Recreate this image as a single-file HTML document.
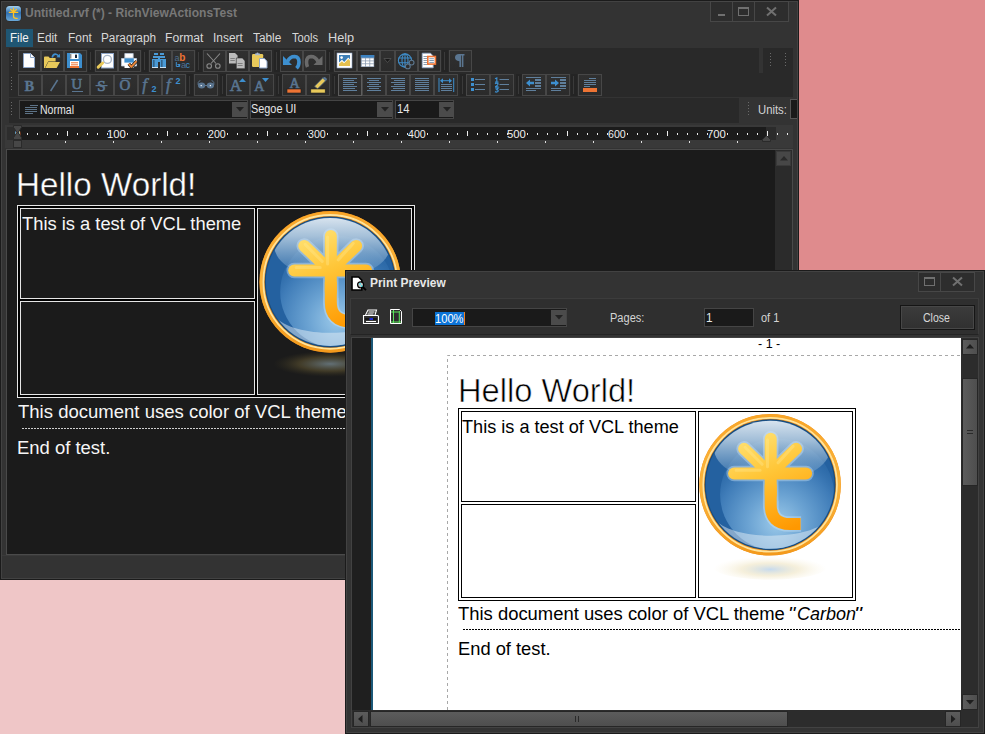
<!DOCTYPE html>
<html><head><meta charset="utf-8">
<style>
*{margin:0;padding:0;box-sizing:border-box}
html,body{width:985px;height:734px;overflow:hidden;background:#df8b8d;position:relative}
.a{position:absolute}
.t{position:absolute;white-space:pre;font-family:"Liberation Sans",sans-serif;transform-origin:0 0}
svg{position:absolute;overflow:visible}
</style></head><body>
<div class="a" style="left:0px;top:580px;width:345px;height:154px;background:#efc6c7;"></div>
<div class="a" style="left:0px;top:0px;width:799px;height:580px;background:#1b1b1b;"></div>
<div class="a" style="left:1px;top:1px;width:797px;height:578px;background:#424242;"></div>
<div class="a" style="left:2px;top:2px;width:795px;height:576px;background:#333333;"></div>
<div class="a" style="left:710px;top:1px;width:79px;height:21px;border:1px solid #474747;background:#2d2d2d;"></div>
<div class="a" style="left:732px;top:1px;width:1px;height:21px;background:#474747;"></div>
<div class="a" style="left:754px;top:1px;width:1px;height:21px;background:#474747;"></div>
<div class="a" style="left:718px;top:14px;width:7px;height:2px;background:#707070;"></div>
<div class="a" style="left:738px;top:7px;width:11px;height:9px;border:1px solid #707070;background:transparent;"></div>
<div class="a" style="left:738px;top:7px;width:11px;height:2px;background:#707070;"></div>
<svg style="left:766px;top:7px" width="11" height="9"><path d="M1 0.5L10 8.5M10 0.5L1 8.5" stroke="#707070" stroke-width="2"/></svg>
<div class="t" style="left:25.49px;top:7.20px;font-size:12px;line-height:12px;color:#787878;font-weight:700;font-style:normal;transform:scaleX(1.0052);">Untitled.rvf (*) - RichViewActionsTest</div>
<div class="a" style="left:6px;top:29px;width:27px;height:18px;background:#1f5673;"></div>
<div class="t" style="left:9.63px;top:32.40px;font-size:12px;line-height:12px;color:#f2f2f2;font-weight:400;font-style:normal;transform:scaleX(0.9667);">File</div>
<div class="t" style="left:37.41px;top:32.40px;font-size:12px;line-height:12px;color:#d8d8d8;font-weight:400;font-style:normal;transform:scaleX(0.9850);">Edit</div>
<div class="t" style="left:67.61px;top:32.40px;font-size:12px;line-height:12px;color:#d8d8d8;font-weight:400;font-style:normal;transform:scaleX(0.9913);">Font</div>
<div class="t" style="left:101.42px;top:32.40px;font-size:12px;line-height:12px;color:#d8d8d8;font-weight:400;font-style:normal;transform:scaleX(0.9815);">Paragraph</div>
<div class="t" style="left:165.49px;top:32.40px;font-size:12px;line-height:12px;color:#d8d8d8;font-weight:400;font-style:normal;transform:scaleX(1.0108);">Format</div>
<div class="t" style="left:213.01px;top:32.40px;font-size:12px;line-height:12px;color:#d8d8d8;font-weight:400;font-style:normal;transform:scaleX(0.9931);">Insert</div>
<div class="t" style="left:253.40px;top:32.40px;font-size:12px;line-height:12px;color:#d8d8d8;font-weight:400;font-style:normal;transform:scaleX(0.9857);">Table</div>
<div class="t" style="left:291.60px;top:32.40px;font-size:12px;line-height:12px;color:#d8d8d8;font-weight:400;font-style:normal;transform:scaleX(0.9286);">Tools</div>
<div class="t" style="left:328.24px;top:32.40px;font-size:12px;line-height:12px;color:#d8d8d8;font-weight:400;font-style:normal;transform:scaleX(1.0609);">Help</div>
<div class="a" style="left:9px;top:48px;width:750px;height:25px;background:#292929;"></div>
<div class="a" style="left:9px;top:73px;width:784px;height:24px;background:#292929;"></div>
<div class="a" style="left:9px;top:98px;width:730px;height:25px;background:#292929;"></div>
<div class="a" style="left:763px;top:48px;width:30px;height:25px;background:#292929;"></div>
<svg style="left:11px;top:52px" width="2" height="16"><path d="M0.5 1V15" stroke="#6a6a6a" stroke-width="1" stroke-dasharray="1 2"/></svg>
<svg style="left:11px;top:76px" width="2" height="16"><path d="M0.5 1V15" stroke="#6a6a6a" stroke-width="1" stroke-dasharray="1 2"/></svg>
<svg style="left:11px;top:101px" width="2" height="16"><path d="M0.5 1V15" stroke="#6a6a6a" stroke-width="1" stroke-dasharray="1 2"/></svg>
<svg style="left:748px;top:101px" width="2" height="16"><path d="M0.5 1V15" stroke="#6a6a6a" stroke-width="1" stroke-dasharray="1 2"/></svg>
<svg style="left:770px;top:52px" width="2" height="16"><path d="M0.5 1V15" stroke="#6a6a6a" stroke-width="1" stroke-dasharray="1 2"/></svg>
<svg style="left:785px;top:52px" width="2" height="16"><path d="M0.5 1V15" stroke="#6a6a6a" stroke-width="1" stroke-dasharray="1 2"/></svg>
<div class="a" style="left:18px;top:50px;width:23px;height:22px;border:1px solid #474747;background:linear-gradient(#303030,#2b2b2b)"></div>
<div class="a" style="left:41px;top:50px;width:23px;height:22px;border:1px solid #474747;background:linear-gradient(#303030,#2b2b2b)"></div>
<div class="a" style="left:64px;top:50px;width:23px;height:22px;border:1px solid #474747;background:linear-gradient(#303030,#2b2b2b)"></div>
<div class="a" style="left:88px;top:50px;width:6px;height:22px;background:#242424;"></div>
<div class="a" style="left:90px;top:52px;width:1px;height:18px;background:#3a3a3a;"></div>
<div class="a" style="left:95px;top:50px;width:23px;height:22px;border:1px solid #474747;background:linear-gradient(#303030,#2b2b2b)"></div>
<div class="a" style="left:118px;top:50px;width:23px;height:22px;border:1px solid #474747;background:linear-gradient(#303030,#2b2b2b)"></div>
<div class="a" style="left:142px;top:50px;width:6px;height:22px;background:#242424;"></div>
<div class="a" style="left:144px;top:52px;width:1px;height:18px;background:#3a3a3a;"></div>
<div class="a" style="left:149px;top:50px;width:23px;height:22px;border:1px solid #474747;background:linear-gradient(#303030,#2b2b2b)"></div>
<div class="a" style="left:172px;top:50px;width:23px;height:22px;border:1px solid #474747;background:linear-gradient(#303030,#2b2b2b)"></div>
<div class="a" style="left:196px;top:50px;width:6px;height:22px;background:#242424;"></div>
<div class="a" style="left:198px;top:52px;width:1px;height:18px;background:#3a3a3a;"></div>
<div class="a" style="left:203px;top:50px;width:23px;height:22px;border:1px solid #474747;background:linear-gradient(#303030,#2b2b2b)"></div>
<div class="a" style="left:226px;top:50px;width:23px;height:22px;border:1px solid #474747;background:linear-gradient(#303030,#2b2b2b)"></div>
<div class="a" style="left:249px;top:50px;width:23px;height:22px;border:1px solid #474747;background:linear-gradient(#303030,#2b2b2b)"></div>
<div class="a" style="left:274px;top:50px;width:6px;height:22px;background:#242424;"></div>
<div class="a" style="left:276px;top:52px;width:1px;height:18px;background:#3a3a3a;"></div>
<div class="a" style="left:280px;top:50px;width:23px;height:22px;border:1px solid #474747;background:linear-gradient(#303030,#2b2b2b)"></div>
<div class="a" style="left:303px;top:50px;width:23px;height:22px;border:1px solid #474747;background:linear-gradient(#303030,#2b2b2b)"></div>
<div class="a" style="left:327px;top:50px;width:6px;height:22px;background:#242424;"></div>
<div class="a" style="left:329px;top:52px;width:1px;height:18px;background:#3a3a3a;"></div>
<div class="a" style="left:334px;top:50px;width:23px;height:22px;border:1px solid #474747;background:linear-gradient(#303030,#2b2b2b)"></div>
<div class="a" style="left:357px;top:50px;width:23px;height:22px;border:1px solid #474747;background:linear-gradient(#303030,#2b2b2b)"></div>
<div class="a" style="left:380px;top:50px;width:15px;height:22px;border:1px solid #474747;background:linear-gradient(#303030,#2b2b2b)"></div>
<div class="a" style="left:395px;top:50px;width:23px;height:22px;border:1px solid #474747;background:linear-gradient(#303030,#2b2b2b)"></div>
<div class="a" style="left:418px;top:50px;width:23px;height:22px;border:1px solid #474747;background:linear-gradient(#303030,#2b2b2b)"></div>
<div class="a" style="left:442px;top:50px;width:6px;height:22px;background:#242424;"></div>
<div class="a" style="left:444px;top:52px;width:1px;height:18px;background:#3a3a3a;"></div>
<div class="a" style="left:449px;top:50px;width:23px;height:22px;border:1px solid #474747;background:linear-gradient(#303030,#2b2b2b)"></div>
<div class="a" style="left:18px;top:74px;width:24px;height:22px;border:1px solid #474747;background:linear-gradient(#303030,#2b2b2b)"></div>
<div class="a" style="left:42px;top:74px;width:24px;height:22px;border:1px solid #474747;background:linear-gradient(#303030,#2b2b2b)"></div>
<div class="a" style="left:66px;top:74px;width:24px;height:22px;border:1px solid #474747;background:linear-gradient(#303030,#2b2b2b)"></div>
<div class="a" style="left:90px;top:74px;width:24px;height:22px;border:1px solid #474747;background:linear-gradient(#303030,#2b2b2b)"></div>
<div class="a" style="left:114px;top:74px;width:24px;height:22px;border:1px solid #474747;background:linear-gradient(#303030,#2b2b2b)"></div>
<div class="a" style="left:138px;top:74px;width:24px;height:22px;border:1px solid #474747;background:linear-gradient(#303030,#2b2b2b)"></div>
<div class="a" style="left:162px;top:74px;width:24px;height:22px;border:1px solid #474747;background:linear-gradient(#303030,#2b2b2b)"></div>
<div class="a" style="left:187px;top:74px;width:6px;height:22px;background:#242424;"></div>
<div class="a" style="left:189px;top:76px;width:1px;height:18px;background:#3a3a3a;"></div>
<div class="a" style="left:194px;top:74px;width:24px;height:22px;border:1px solid #474747;background:linear-gradient(#303030,#2b2b2b)"></div>
<div class="a" style="left:220px;top:74px;width:6px;height:22px;background:#242424;"></div>
<div class="a" style="left:222px;top:76px;width:1px;height:18px;background:#3a3a3a;"></div>
<div class="a" style="left:226px;top:74px;width:24px;height:22px;border:1px solid #474747;background:linear-gradient(#303030,#2b2b2b)"></div>
<div class="a" style="left:250px;top:74px;width:24px;height:22px;border:1px solid #474747;background:linear-gradient(#303030,#2b2b2b)"></div>
<div class="a" style="left:276px;top:74px;width:6px;height:22px;background:#242424;"></div>
<div class="a" style="left:278px;top:76px;width:1px;height:18px;background:#3a3a3a;"></div>
<div class="a" style="left:282px;top:74px;width:24px;height:22px;border:1px solid #474747;background:linear-gradient(#303030,#2b2b2b)"></div>
<div class="a" style="left:306px;top:74px;width:24px;height:22px;border:1px solid #474747;background:linear-gradient(#303030,#2b2b2b)"></div>
<div class="a" style="left:332px;top:74px;width:6px;height:22px;background:#242424;"></div>
<div class="a" style="left:334px;top:76px;width:1px;height:18px;background:#3a3a3a;"></div>
<div class="a" style="left:338px;top:74px;width:24px;height:22px;border:1px solid #5e5e5e;background:linear-gradient(#303030,#2b2b2b)"></div>
<div class="a" style="left:362px;top:74px;width:24px;height:22px;border:1px solid #474747;background:linear-gradient(#303030,#2b2b2b)"></div>
<div class="a" style="left:386px;top:74px;width:24px;height:22px;border:1px solid #474747;background:linear-gradient(#303030,#2b2b2b)"></div>
<div class="a" style="left:410px;top:74px;width:24px;height:22px;border:1px solid #474747;background:linear-gradient(#303030,#2b2b2b)"></div>
<div class="a" style="left:434px;top:74px;width:24px;height:22px;border:1px solid #474747;background:linear-gradient(#303030,#2b2b2b)"></div>
<div class="a" style="left:460px;top:74px;width:6px;height:22px;background:#242424;"></div>
<div class="a" style="left:462px;top:76px;width:1px;height:18px;background:#3a3a3a;"></div>
<div class="a" style="left:466px;top:74px;width:24px;height:22px;border:1px solid #474747;background:linear-gradient(#303030,#2b2b2b)"></div>
<div class="a" style="left:490px;top:74px;width:24px;height:22px;border:1px solid #474747;background:linear-gradient(#303030,#2b2b2b)"></div>
<div class="a" style="left:516px;top:74px;width:6px;height:22px;background:#242424;"></div>
<div class="a" style="left:518px;top:76px;width:1px;height:18px;background:#3a3a3a;"></div>
<div class="a" style="left:522px;top:74px;width:24px;height:22px;border:1px solid #474747;background:linear-gradient(#303030,#2b2b2b)"></div>
<div class="a" style="left:546px;top:74px;width:24px;height:22px;border:1px solid #474747;background:linear-gradient(#303030,#2b2b2b)"></div>
<div class="a" style="left:571px;top:74px;width:6px;height:22px;background:#242424;"></div>
<div class="a" style="left:573px;top:76px;width:1px;height:18px;background:#3a3a3a;"></div>
<div class="a" style="left:578px;top:74px;width:24px;height:22px;border:1px solid #474747;background:linear-gradient(#303030,#2b2b2b)"></div>
<div class="a" style="left:19px;top:100px;width:229px;height:19px;border:1px solid #454545;background:#1a1a1a;"></div>
<div class="a" style="left:232px;top:102px;width:15px;height:15px;background:#4b4b4b;"></div>
<svg style="left:236px;top:107px" width="8" height="5"><path d="M0 0H8L4 4.5Z" fill="#222"/></svg>
<div class="a" style="left:250px;top:100px;width:143px;height:19px;border:1px solid #454545;background:#1a1a1a;"></div>
<div class="a" style="left:377px;top:102px;width:15px;height:15px;background:#4b4b4b;"></div>
<svg style="left:381px;top:107px" width="8" height="5"><path d="M0 0H8L4 4.5Z" fill="#222"/></svg>
<div class="a" style="left:395px;top:100px;width:59px;height:19px;border:1px solid #454545;background:#1a1a1a;"></div>
<div class="a" style="left:439px;top:102px;width:15px;height:15px;background:#4b4b4b;"></div>
<svg style="left:443px;top:107px" width="8" height="5"><path d="M0 0H8L4 4.5Z" fill="#222"/></svg>
<div class="a" style="left:30px;top:105px;width:8px;height:1px;background:#5d7387;"></div>
<div class="a" style="left:25px;top:107px;width:12px;height:1px;background:#5d7387;"></div>
<div class="a" style="left:25px;top:109px;width:12px;height:1px;background:#5d7387;"></div>
<div class="a" style="left:25px;top:111px;width:12px;height:1px;background:#5d7387;"></div>
<div class="a" style="left:25px;top:113px;width:8px;height:1px;background:#5d7387;"></div>
<div class="t" style="left:39.92px;top:103.80px;font-size:12px;line-height:12px;color:#e6e6e6;font-weight:400;font-style:normal;transform:scaleX(0.8784);">Normal</div>
<div class="t" style="left:250.99px;top:103.20px;font-size:12px;line-height:12px;color:#e6e6e6;font-weight:400;font-style:normal;transform:scaleX(0.9062);">Segoe UI</div>
<div class="t" style="left:396.97px;top:103.00px;font-size:12px;line-height:12px;color:#e6e6e6;font-weight:400;font-style:normal;transform:scaleX(0.9333);">14</div>
<div class="t" style="left:757.76px;top:103.80px;font-size:12px;line-height:12px;color:#d4d4d4;font-weight:400;font-style:normal;transform:scaleX(0.9414);">Units:</div>
<div class="a" style="left:790px;top:99px;width:7px;height:20px;border:1px solid #555;border-right:none;background:#1a1a1a"></div>
<div class="a" style="left:5px;top:125px;width:788px;height:23px;background:#393939;"></div>
<div class="a" style="left:7px;top:127px;width:759px;height:13px;background:#1b1b1b;"></div>
<div class="a" style="left:7px;top:127px;width:10px;height:13px;background:#2d2d2d;"></div>
<div class="a" style="left:766px;top:127px;width:10px;height:13px;background:#2b2b2b;"></div>
<svg style="left:0;top:0" width="985" height="734"><rect x="27" y="133" width="1" height="2" fill="#e8e8e8"/><rect x="37" y="133" width="1" height="2" fill="#e8e8e8"/><rect x="47" y="133" width="1" height="2" fill="#e8e8e8"/><rect x="57" y="133" width="1" height="2" fill="#e8e8e8"/><rect x="67" y="131" width="1" height="5" fill="#f0f0f0"/><rect x="77" y="133" width="1" height="2" fill="#e8e8e8"/><rect x="87" y="133" width="1" height="2" fill="#e8e8e8"/><rect x="97" y="133" width="1" height="2" fill="#e8e8e8"/><rect x="107" y="133" width="1" height="2" fill="#e8e8e8"/><rect x="127" y="133" width="1" height="2" fill="#e8e8e8"/><rect x="137" y="133" width="1" height="2" fill="#e8e8e8"/><rect x="147" y="133" width="1" height="2" fill="#e8e8e8"/><rect x="157" y="133" width="1" height="2" fill="#e8e8e8"/><rect x="167" y="131" width="1" height="5" fill="#f0f0f0"/><rect x="177" y="133" width="1" height="2" fill="#e8e8e8"/><rect x="187" y="133" width="1" height="2" fill="#e8e8e8"/><rect x="197" y="133" width="1" height="2" fill="#e8e8e8"/><rect x="207" y="133" width="1" height="2" fill="#e8e8e8"/><rect x="227" y="133" width="1" height="2" fill="#e8e8e8"/><rect x="237" y="133" width="1" height="2" fill="#e8e8e8"/><rect x="247" y="133" width="1" height="2" fill="#e8e8e8"/><rect x="257" y="133" width="1" height="2" fill="#e8e8e8"/><rect x="267" y="131" width="1" height="5" fill="#f0f0f0"/><rect x="277" y="133" width="1" height="2" fill="#e8e8e8"/><rect x="287" y="133" width="1" height="2" fill="#e8e8e8"/><rect x="297" y="133" width="1" height="2" fill="#e8e8e8"/><rect x="307" y="133" width="1" height="2" fill="#e8e8e8"/><rect x="327" y="133" width="1" height="2" fill="#e8e8e8"/><rect x="337" y="133" width="1" height="2" fill="#e8e8e8"/><rect x="347" y="133" width="1" height="2" fill="#e8e8e8"/><rect x="357" y="133" width="1" height="2" fill="#e8e8e8"/><rect x="367" y="131" width="1" height="5" fill="#f0f0f0"/><rect x="377" y="133" width="1" height="2" fill="#e8e8e8"/><rect x="387" y="133" width="1" height="2" fill="#e8e8e8"/><rect x="397" y="133" width="1" height="2" fill="#e8e8e8"/><rect x="407" y="133" width="1" height="2" fill="#e8e8e8"/><rect x="427" y="133" width="1" height="2" fill="#e8e8e8"/><rect x="437" y="133" width="1" height="2" fill="#e8e8e8"/><rect x="447" y="133" width="1" height="2" fill="#e8e8e8"/><rect x="457" y="133" width="1" height="2" fill="#e8e8e8"/><rect x="467" y="131" width="1" height="5" fill="#f0f0f0"/><rect x="477" y="133" width="1" height="2" fill="#e8e8e8"/><rect x="487" y="133" width="1" height="2" fill="#e8e8e8"/><rect x="497" y="133" width="1" height="2" fill="#e8e8e8"/><rect x="507" y="133" width="1" height="2" fill="#e8e8e8"/><rect x="527" y="133" width="1" height="2" fill="#e8e8e8"/><rect x="537" y="133" width="1" height="2" fill="#e8e8e8"/><rect x="547" y="133" width="1" height="2" fill="#e8e8e8"/><rect x="557" y="133" width="1" height="2" fill="#e8e8e8"/><rect x="567" y="131" width="1" height="5" fill="#f0f0f0"/><rect x="577" y="133" width="1" height="2" fill="#e8e8e8"/><rect x="587" y="133" width="1" height="2" fill="#e8e8e8"/><rect x="597" y="133" width="1" height="2" fill="#e8e8e8"/><rect x="607" y="133" width="1" height="2" fill="#e8e8e8"/><rect x="627" y="133" width="1" height="2" fill="#e8e8e8"/><rect x="637" y="133" width="1" height="2" fill="#e8e8e8"/><rect x="647" y="133" width="1" height="2" fill="#e8e8e8"/><rect x="657" y="133" width="1" height="2" fill="#e8e8e8"/><rect x="667" y="131" width="1" height="5" fill="#f0f0f0"/><rect x="677" y="133" width="1" height="2" fill="#e8e8e8"/><rect x="687" y="133" width="1" height="2" fill="#e8e8e8"/><rect x="697" y="133" width="1" height="2" fill="#e8e8e8"/><rect x="707" y="133" width="1" height="2" fill="#e8e8e8"/><rect x="727" y="133" width="1" height="2" fill="#e8e8e8"/><rect x="737" y="133" width="1" height="2" fill="#e8e8e8"/><rect x="747" y="133" width="1" height="2" fill="#e8e8e8"/><rect x="757" y="133" width="1" height="2" fill="#e8e8e8"/><rect x="767" y="131" width="1" height="5" fill="#f0f0f0"/><rect x="777" y="133" width="1" height="2" fill="#e8e8e8"/><rect x="787" y="133" width="1" height="2" fill="#e8e8e8"/><rect x="65" y="141" width="1" height="2" fill="#e0e0e0"/><rect x="113" y="141" width="1" height="2" fill="#e0e0e0"/><rect x="161" y="141" width="1" height="2" fill="#e0e0e0"/><rect x="209" y="141" width="1" height="2" fill="#e0e0e0"/><rect x="257" y="141" width="1" height="2" fill="#e0e0e0"/><rect x="305" y="141" width="1" height="2" fill="#e0e0e0"/><rect x="353" y="141" width="1" height="2" fill="#e0e0e0"/><rect x="401" y="141" width="1" height="2" fill="#e0e0e0"/><rect x="449" y="141" width="1" height="2" fill="#e0e0e0"/><rect x="497" y="141" width="1" height="2" fill="#e0e0e0"/><rect x="545" y="141" width="1" height="2" fill="#e0e0e0"/><rect x="593" y="141" width="1" height="2" fill="#e0e0e0"/><rect x="641" y="141" width="1" height="2" fill="#e0e0e0"/><rect x="689" y="141" width="1" height="2" fill="#e0e0e0"/><rect x="737" y="141" width="1" height="2" fill="#e0e0e0"/></svg>
<div class="t" style="left:14.60px;top:129.50px;font-size:10px;line-height:10px;color:#f0f0f0;font-weight:400;font-style:normal;transform:scaleX(0.9600);">0</div>
<div class="t" style="left:107.17px;top:129.50px;font-size:10px;line-height:10px;color:#f0f0f0;font-weight:400;font-style:normal;transform:scaleX(1.1333);">100</div>
<div class="t" style="left:208.30px;top:129.50px;font-size:10px;line-height:10px;color:#f0f0f0;font-weight:400;font-style:normal;transform:scaleX(1.0625);">200</div>
<div class="t" style="left:308.30px;top:129.50px;font-size:10px;line-height:10px;color:#f0f0f0;font-weight:400;font-style:normal;transform:scaleX(1.0625);">300</div>
<div class="t" style="left:408.30px;top:129.50px;font-size:10px;line-height:10px;color:#f0f0f0;font-weight:400;font-style:normal;transform:scaleX(1.0625);">400</div>
<div class="t" style="left:507.17px;top:129.50px;font-size:10px;line-height:10px;color:#f0f0f0;font-weight:400;font-style:normal;transform:scaleX(1.1333);">500</div>
<div class="t" style="left:608.30px;top:129.50px;font-size:10px;line-height:10px;color:#f0f0f0;font-weight:400;font-style:normal;transform:scaleX(1.0625);">600</div>
<div class="t" style="left:707.17px;top:129.50px;font-size:10px;line-height:10px;color:#f0f0f0;font-weight:400;font-style:normal;transform:scaleX(1.1333);">700</div>
<svg style="left:0;top:0" width="985" height="734"><path d="M13.5 125.5H21.5V127.5L18 132.5L21.5 137.5V139.5H13.5V137.5L17 132.5L13.5 127.5Z" fill="#474747" stroke="#2a2a2a"/><rect x="13.5" y="140.5" width="8" height="7" fill="#474747" stroke="#2a2a2a"/><path d="M762.5 141.5V139.5L766.5 135.5L770.5 139.5V141.5Z" fill="#474747" stroke="#2a2a2a"/></svg>
<div class="a" style="left:6px;top:149px;width:787px;height:406px;background:#4a4a4a;"></div>
<div class="a" style="left:7px;top:150px;width:785px;height:404px;background:#1b1b1b;"></div>
<div class="a" style="left:775px;top:150px;width:17px;height:404px;background:#2b2b2b;"></div>
<div class="a" style="left:776px;top:151px;width:15px;height:15px;border:1px solid #3a3a3a;background:#474747;"></div>
<svg style="left:780px;top:156px" width="8" height="5"><path d="M0 4.5H8L4 0Z" fill="#2a2a2a"/></svg>
<div class="a" style="left:2px;top:555px;width:795px;height:23px;background:#333333;"></div>
<div class="a" style="left:2px;top:555px;width:795px;height:1px;background:#3a3a3a;"></div>
<div class="t" style="left:16.13px;top:167.60px;font-size:33.5px;line-height:33.5px;color:#ffffff;font-weight:400;font-style:normal;transform:scaleX(0.9915);-webkit-text-stroke:0.4px #1b1b1b;">Hello World!</div>
<div class="a" style="left:17px;top:205px;width:398px;height:193px;background:#e6e6e6;"></div>
<div class="a" style="left:18px;top:206px;width:396px;height:191px;background:#000000;"></div>
<div class="a" style="left:20px;top:208px;width:235px;height:91px;border:1px solid #e6e6e6;background:#1b1b1b;"></div>
<div class="a" style="left:257px;top:208px;width:155px;height:187px;border:1px solid #e6e6e6;background:#1b1b1b;"></div>
<div class="a" style="left:20px;top:301px;width:235px;height:94px;border:1px solid #e6e6e6;background:#1b1b1b;"></div>
<div class="t" style="left:22.30px;top:214.60px;font-size:18.67px;line-height:18.67px;color:#f6f6f6;font-weight:400;font-style:normal;transform:scaleX(0.9821);">This is a test of VCL theme</div>
<div class="t" style="left:17.60px;top:402.60px;font-size:18.67px;line-height:18.67px;color:#f6f6f6;font-weight:400;font-style:normal;transform:scaleX(0.9930);">This document uses color of VCL theme</div>
<div class="t" style="left:17.41px;top:438.50px;font-size:18.67px;line-height:18.67px;color:#f6f6f6;font-weight:400;font-style:normal;transform:scaleX(0.9891);">End of test.</div>
<svg style="left:22px;top:427px" width="330" height="2"><path d="M0 1.5H330" stroke="#d0d0d0" stroke-width="1" stroke-dasharray="2 1"/></svg>
<svg width="0" height="0" style="left:0;top:0"><defs>
<linearGradient id="lgRing" x1="0" y1="0" x2="0" y2="1">
 <stop offset="0" stop-color="#f9a628"/><stop offset="0.5" stop-color="#fbb43a"/><stop offset="1" stop-color="#f39a1c"/>
</linearGradient>
<radialGradient id="lgSph" cx="0.5" cy="0.75" r="0.65">
 <stop offset="0" stop-color="#9ccaea"/><stop offset="0.4" stop-color="#6aa2d2"/><stop offset="0.8" stop-color="#3f7cb8"/><stop offset="1" stop-color="#3270ae" stop-opacity="0.6"/>
</radialGradient>
<linearGradient id="lgGloss" x1="0" y1="0" x2="0" y2="1">
 <stop offset="0" stop-color="#eef3f8" stop-opacity="0.95"/><stop offset="0.35" stop-color="#d0e0ec" stop-opacity="0.75"/><stop offset="1" stop-color="#a0c4e0" stop-opacity="0.1"/>
</linearGradient>
<linearGradient id="lgT" gradientUnits="userSpaceOnUse" x1="-20" y1="-50" x2="20" y2="45">
 <stop offset="0" stop-color="#ffe070"/><stop offset="0.4" stop-color="#ffc638"/><stop offset="1" stop-color="#ff9800"/>
</linearGradient>
<radialGradient id="lgShadowD" cx="0.5" cy="0.5" r="0.5">
 <stop offset="0" stop-color="#7a8c94" stop-opacity="0.75"/><stop offset="0.55" stop-color="#5a5030" stop-opacity="0.6"/><stop offset="1" stop-color="#3a3420" stop-opacity="0"/>
</radialGradient>
<radialGradient id="lgShadowL" cx="0.5" cy="0.6" r="0.5">
 <stop offset="0" stop-color="#bcd4ec" stop-opacity="0.85"/><stop offset="0.5" stop-color="#ece0b8" stop-opacity="0.5"/><stop offset="1" stop-color="#f8f0d8" stop-opacity="0"/>
</radialGradient>
<clipPath id="lgClip"><circle r="64"/></clipPath>
<g id="lgBody">
 <circle r="70.8" fill="#f0901a"/>
 <circle r="69.2" fill="none" stroke="url(#lgRing)" stroke-width="2.6"/>
 <circle r="66.9" fill="none" stroke="#ffe49a" stroke-width="1.8"/>
 <circle r="65.5" fill="#1a4c7c"/>
 <circle r="64.3" fill="#2461a0"/>
 <g clip-path="url(#lgClip)">
  <ellipse cx="7" cy="10" rx="57" ry="56" fill="url(#lgSph)"/>
  <ellipse cx="2" cy="-36" rx="58" ry="32" fill="url(#lgGloss)"/>
  <path d="M-56 34C-42 58 -15 65 5 65C30 65 50 54 58 34C44 55 -36 58 -56 34Z" fill="#e4eef6" opacity="0.5"/>
 </g>
 <g fill="none" stroke-linecap="round" stroke="#cfe6f8" stroke-width="15.5" opacity="0.4">
  <path d="M0.6 -46V-11M-36 -11.3H36M0 -11L-26 -36M0 -11L26 -36M0.6 -11V20"/><path d="M0.6 16V20Q0.6 39.3 20 39.3H31" stroke-linecap="butt"/>
 </g>
 <g fill="none" stroke="url(#lgT)" stroke-width="12" stroke-linecap="round" stroke-linejoin="round">
  <path d="M-36 -11.3H36"/>
  <path d="M0 -11L-26 -36M0 -11L26 -36"/>
  <path d="M0.6 -46V10"/>
  <path d="M0.6 0V20Q0.6 39.3 20 39.3H30.5" stroke-linecap="butt"/>
 </g>
 <g fill="none" stroke="#fff0a0" stroke-width="3" stroke-linecap="round" opacity="0.3">
  <path d="M-2.6 -45V-18M-34 -14.5H-10M-25 -37.5L-8 -20.5M23 -38.5L8 -22"/>
 </g>
</g>
</defs></svg>
<svg style="left:0;top:0" width="985" height="734"><ellipse cx="330.2" cy="363.9" rx="57" ry="13" fill="url(#lgShadowD)"/><use href="#lgBody" x="330.2" y="281.9"/></svg>
<div class="a" style="left:345px;top:270px;width:640px;height:464px;background:#1b1b1b;"></div>
<div class="a" style="left:346px;top:271px;width:638px;height:462px;background:#424242;"></div>
<div class="a" style="left:347px;top:272px;width:636px;height:460px;background:#333333;"></div>
<div class="a" style="left:918px;top:272px;width:57px;height:20px;border:1px solid #474747;background:#2d2d2d;"></div>
<div class="a" style="left:940px;top:272px;width:1px;height:20px;background:#474747;"></div>
<div class="a" style="left:924px;top:277px;width:11px;height:9px;border:1px solid #707070;background:transparent;"></div>
<div class="a" style="left:924px;top:277px;width:11px;height:2px;background:#707070;"></div>
<svg style="left:952px;top:277px" width="11" height="9"><path d="M1 0.5L10 8.5M10 0.5L1 8.5" stroke="#707070" stroke-width="2"/></svg>
<div class="t" style="left:370.30px;top:277.10px;font-size:12px;line-height:12px;color:#e8e8e8;font-weight:700;font-style:normal;transform:scaleX(0.9960);">Print Preview</div>
<div class="a" style="left:350px;top:298px;width:629px;height:37px;border:1px solid #3c3c3c;border-bottom-color:#242424;background:#2f2f2f"></div>
<div class="a" style="left:412px;top:308px;width:155px;height:19px;border:1px solid #454545;background:#1a1a1a;"></div>
<div class="a" style="left:551px;top:310px;width:15px;height:15px;background:#4b4b4b;"></div>
<svg style="left:555px;top:315px" width="8" height="5"><path d="M0 0H8L4 4.5Z" fill="#222"/></svg>
<div class="a" style="left:435px;top:312px;width:29px;height:13px;background:#0b73d6;"></div>
<div class="a" style="left:464px;top:312px;width:1px;height:13px;background:#f08020;"></div>
<div class="t" style="left:435.47px;top:312.90px;font-size:12px;line-height:12px;color:#ffffff;font-weight:400;font-style:normal;transform:scaleX(0.9276);">100%</div>
<div class="t" style="left:609.68px;top:311.90px;font-size:12px;line-height:12px;color:#d4d4d4;font-weight:400;font-style:normal;transform:scaleX(0.9200);">Pages:</div>
<div class="a" style="left:704px;top:308px;width:50px;height:19px;border:1px solid #454545;background:#1a1a1a;"></div>
<div class="t" style="left:706.02px;top:312.00px;font-size:12px;line-height:12px;color:#e8e8e8;font-weight:400;font-style:normal;transform:scaleX(0.9800);">1</div>
<div class="t" style="left:761.10px;top:312.00px;font-size:12px;line-height:12px;color:#d4d4d4;font-weight:400;font-style:normal;transform:scaleX(0.9150);">of 1</div>
<div class="a" style="left:900px;top:305px;width:75px;height:25px;border:1px solid #151515;background:linear-gradient(#3c3c3c,#303030);box-shadow:inset 0 0 0 1px #474747"></div>
<div class="t" style="left:923.02px;top:312.00px;font-size:12px;line-height:12px;color:#d8d8d8;font-weight:400;font-style:normal;transform:scaleX(0.8793);">Close</div>
<div class="a" style="left:351px;top:337px;width:628px;height:391px;background:#424242;"></div>
<div class="a" style="left:352px;top:338px;width:609px;height:373px;background:#1f1f1f;"></div>
<div class="a" style="left:371px;top:338px;width:2px;height:372px;background:#1b5878;"></div>
<div class="a" style="left:373px;top:338px;width:588px;height:372px;background:#ffffff;"></div>
<div class="a" style="left:961px;top:338px;width:17px;height:373px;background:#2c2c2c;"></div>
<div class="a" style="left:962px;top:339px;width:16px;height:16px;border:1px solid #262626;background:linear-gradient(90deg,#5c5c5c,#4e4e4e);"></div>
<svg style="left:966px;top:344px" width="8" height="5"><path d="M0 4.5H8L4 0Z" fill="#1e1e1e"/></svg>
<div class="a" style="left:962px;top:378px;width:16px;height:108px;border:1px solid #262626;background:linear-gradient(90deg,#5c5c5c,#4e4e4e);"></div>
<div class="a" style="left:967px;top:430px;width:6px;height:1px;background:#2a2a2a;"></div>
<div class="a" style="left:967px;top:433px;width:6px;height:1px;background:#2a2a2a;"></div>
<div class="a" style="left:962px;top:694px;width:16px;height:16px;border:1px solid #262626;background:linear-gradient(90deg,#5c5c5c,#4e4e4e);"></div>
<svg style="left:966px;top:700px" width="8" height="5"><path d="M0 0H8L4 4.5Z" fill="#1e1e1e"/></svg>
<div class="a" style="left:352px;top:710px;width:626px;height:17px;background:#2c2c2c;"></div>
<div class="a" style="left:353px;top:711px;width:16px;height:16px;border:1px solid #262626;background:linear-gradient(#5c5c5c,#4e4e4e);"></div>
<svg style="left:358px;top:715px" width="5" height="8"><path d="M4.5 0V8L0 4Z" fill="#1e1e1e"/></svg>
<div class="a" style="left:370px;top:711px;width:418px;height:16px;border:1px solid #262626;background:linear-gradient(#5c5c5c,#4e4e4e);"></div>
<div class="a" style="left:575px;top:716px;width:1px;height:6px;background:#2a2a2a;"></div>
<div class="a" style="left:578px;top:716px;width:1px;height:6px;background:#2a2a2a;"></div>
<div class="a" style="left:945px;top:711px;width:16px;height:16px;border:1px solid #262626;background:linear-gradient(#5c5c5c,#4e4e4e);"></div>
<svg style="left:951px;top:715px" width="5" height="8"><path d="M0 0V8L4.5 4Z" fill="#1e1e1e"/></svg>
<div class="a" style="left:372px;top:338px;width:589px;height:372px;overflow:hidden">
<svg style="left:0;top:0" width="589" height="372"><path d="M75.5 372V17.5H589" fill="none" stroke="#a8a8a8" stroke-width="1" stroke-dasharray="3 3"/></svg>
</div>
<div class="t" style="left:758.10px;top:337.70px;font-size:12px;line-height:12px;color:#000000;font-weight:400;font-style:normal;transform:scaleX(1.0429);">- 1 -</div>
<div class="t" style="left:457.58px;top:373.60px;font-size:33.5px;line-height:33.5px;color:#000000;font-weight:400;font-style:normal;transform:scaleX(0.9744);-webkit-text-stroke:0.6px #ffffff;">Hello World!</div>
<div class="a" style="left:458px;top:408px;width:398px;height:193px;background:#000000;"></div>
<div class="a" style="left:459px;top:409px;width:396px;height:191px;background:#ffffff;"></div>
<div class="a" style="left:461px;top:411px;width:235px;height:91px;border:1px solid #000;background:#fff;"></div>
<div class="a" style="left:698px;top:411px;width:155px;height:187px;border:1px solid #000;background:#fff;"></div>
<div class="a" style="left:461px;top:504px;width:235px;height:94px;border:1px solid #000;background:#fff;"></div>
<div class="t" style="left:462.30px;top:417.70px;font-size:18.67px;line-height:18.67px;color:#000000;font-weight:400;font-style:normal;transform:scaleX(0.9713);">This is a test of VCL theme</div>
<div class="t" style="left:458.30px;top:604.60px;font-size:18.67px;line-height:18.67px;color:#000000;font-weight:400;font-style:normal;transform:scaleX(0.9870);">This document uses color of VCL theme</div>
<div class="t" style="left:788.30px;top:604.60px;font-size:18.67px;line-height:18.67px;color:#000000;font-weight:400;font-style:italic;transform:scaleX(1.1000);">&quot;</div>
<div class="t" style="left:796.64px;top:604.60px;font-size:18.67px;line-height:18.67px;color:#000000;font-weight:400;font-style:italic;transform:scaleX(0.9627);">Carbon</div>
<div class="t" style="left:853.60px;top:604.60px;font-size:18.67px;line-height:18.67px;color:#000000;font-weight:400;font-style:italic;transform:scaleX(1.2000);">&quot;</div>
<div class="t" style="left:457.92px;top:639.80px;font-size:18.67px;line-height:18.67px;color:#000000;font-weight:400;font-style:normal;transform:scaleX(0.9815);">End of test.</div>
<svg style="left:463px;top:628px" width="498" height="2"><path d="M0 1.5H498" stroke="#000" stroke-width="1" stroke-dasharray="2 1"/></svg>
<svg style="left:0;top:0" width="985" height="734"><ellipse cx="770.1" cy="566.8" rx="57" ry="13" fill="url(#lgShadowL)"/><use href="#lgBody" x="770.1" y="484.8"/></svg>
<svg style="left:0;top:0" width="985" height="734" shape-rendering="geometricPrecision"><defs><linearGradient id="appg" x1="0" y1="0" x2="0" y2="1"><stop offset="0" stop-color="#a4d2f0"/><stop offset="0.45" stop-color="#2f6fb0"/><stop offset="1" stop-color="#6aa8d8"/></linearGradient></defs><rect x="5.5" y="5.5" width="16" height="16" rx="4" fill="#1e1e1e" opacity="0.6"/><rect x="6" y="6" width="15" height="15" rx="3.5" fill="url(#appg)"/><g stroke="#ffc226" stroke-width="1.35" stroke-linecap="round" fill="none"><path d="M9.3 12.3H17.8M13.5 8.2V16.3Q13.5 18.3 16 18.3H17.2M13.5 12.3L10.6 9.6M13.5 12.3L16.4 9.6"/></g><path d="M23.5 53.5H30.5L34.5 57.5V67.5H23.5Z" fill="#fff" stroke="#8ea6c8"/><path d="M30.5 53.5V57.5H34.5" fill="#fff" stroke="#8ea6c8"/><path d="M44 68V57.5Q44 56.6 44.9 56.6H48.5L49.8 58H55.6V61.5H48.2L44.8 68Z" fill="#e8c95a"/><path d="M45.2 68L48.3 62H60L56.6 68Z" fill="#e8c95a"/><path d="M52.2 57.5Q53 53.8 56 54.2Q58 54.6 58.6 56.6" fill="none" stroke="#3d8fcf" stroke-width="1.6"/><path d="M56.4 57.2L60.2 57.6L59.8 53.8Z" fill="#3d8fcf"/><path d="M67 53H80L82 55V68H67Z" fill="#3d8fcf"/><rect x="70" y="53.5" width="8.5" height="5.5" fill="#fff"/><rect x="75" y="54.6" width="2" height="3.4" fill="#1c2a3a"/><rect x="70.3" y="54" width="1" height="4.6" fill="#5a5a5a"/><rect x="70" y="61" width="9" height="7" fill="#fff"/><rect x="71" y="62.3" width="7" height="1" fill="#ee7434"/><rect x="71" y="64.3" width="7" height="1" fill="#ee7434"/><rect x="70" y="66" width="9" height="2" fill="#ee7434"/><rect x="101.5" y="53.5" width="12" height="14.5" fill="#fff" stroke="#8ea6c8"/><circle cx="107.4" cy="59.4" r="4" fill="#fff" stroke="#a8b6c8" stroke-width="1.4"/><path d="M98.2 67.2L102.6 63" stroke="#e8c95a" stroke-width="3" stroke-linecap="round"/><path d="M124.8 53.5H133.2V58H124.8Z" fill="#fff" stroke="#b8c4d4" stroke-width="0.8"/><path d="M121.5 58.5H136.5V66H121.5Z" fill="#fff" stroke="#c0ccda" stroke-width="0.8"/><rect x="124.4" y="58.4" width="9.4" height="4.2" fill="#3d8fcf"/><rect x="124.5" y="64" width="9" height="4" fill="#fff"/><path d="M128.8 63.8L131.3 66.8L136.6 61.2" fill="none" stroke="#1e1e1e" stroke-width="3.2"/><path d="M128.8 63.8L131.3 66.8L136.6 61.2" fill="none" stroke="#f08a3a" stroke-width="1.8"/><g fill="#4a9ad6"><rect x="154" y="53" width="4" height="2"/><rect x="160" y="53" width="4" height="2"/><rect x="153" y="56" width="12" height="2"/><rect x="152" y="59" width="6" height="9"/><rect x="160" y="59" width="6" height="9"/><rect x="158" y="58" width="2" height="4"/></g><rect x="153.5" y="60" width="0.8" height="7" fill="#1c2c3c"/><rect x="161.5" y="60" width="0.8" height="7" fill="#1c2c3c"/><rect x="152" y="67" width="6" height="1" fill="#cfe2f2"/><rect x="160" y="67" width="6" height="1" fill="#cfe2f2"/><text x="174.5" y="60.5" font-family="Liberation Sans" font-size="9" fill="#4f6f8c">a</text><text x="179.3" y="60.8" font-family="Liberation Sans" font-size="10" font-weight="bold" fill="#ee7434">b</text><path d="M176.3 62V66.5H179.5" fill="none" stroke="#3d8fcf" stroke-width="1"/><path d="M177 64L180 67.2L180.3 64Z" fill="#3d8fcf"/><text x="181" y="68" font-family="Liberation Sans" font-size="9" fill="#4f6f8c">a</text><text x="185.6" y="68" font-family="Liberation Sans" font-size="9" fill="#3d8fcf">c</text><g stroke="#8a8a8a" stroke-width="1.1" fill="none"><path d="M207 53.5L216 63.5M220 53.5L211 63.5"/><circle cx="209.2" cy="66" r="2.3"/><circle cx="217.8" cy="66" r="2.3"/></g><path d="M229 53H235L237.6 55.6V63.5H229Z" fill="#bcbcbc"/><path d="M236.3 58H242.3L245 60.7V68.7H236.3Z" fill="#bcbcbc" stroke="#2a2a2a" stroke-width="0.6"/><g fill="#7a7a7a"><rect x="230.3" y="58" width="4.5" height="0.9"/><rect x="230.3" y="60" width="4.5" height="0.9"/><rect x="237.6" y="63" width="5" height="0.9"/><rect x="237.6" y="65" width="5" height="0.9"/></g><rect x="252" y="54" width="11.2" height="13" rx="1.2" fill="#e8c95a"/><path d="M255 55.2H260V53.6H258.6Q258.6 52.5 257.5 52.5Q256.4 52.5 256.4 53.6H255Z" fill="#a8b8cc"/><path d="M259.5 58.5H264.3L267 61.2V68H259.5Z" fill="#fff" stroke="#8ea6c8"/><path d="M283 56L283 65L292 65Z" fill="#3d8fcf"/><path d="M287.5 61.5Q290 56.5 294.5 56.5Q299 56.8 299 62Q299 65.8 296.5 68.2" fill="none" stroke="#3d8fcf" stroke-width="3.6"/><path d="M322.5 56L322.5 65L313.5 65Z" fill="#6a6a6a"/><path d="M318 61.5Q315.5 56.5 311 56.5Q306.5 56.8 306.5 62Q306.5 65 307.5 67" fill="none" stroke="#6a6a6a" stroke-width="3.6"/><rect x="337" y="53" width="15" height="15" fill="#fff" stroke="#8ea6c8" stroke-width="0.6"/><rect x="339" y="55" width="11" height="11" fill="#3d7fb8"/><circle cx="341.6" cy="57.6" r="1.3" fill="#fff"/><path d="M339 66V62.6L342 59.8L344.2 62L348.3 57.6L350 59.5V66Z" fill="#fff"/><path d="M339 66V63.8L342 61.2L344 63.2L348.3 59L350 60.8V66Z" fill="#e4c050"/><rect x="360.8" y="55" width="13.4" height="12" fill="#8d9db2"/><rect x="360.8" y="55" width="13.4" height="2.6" fill="#3d82c0"/><rect x="361.8" y="58.4" width="3.4" height="2.1" fill="#fff"/><rect x="366.0" y="58.4" width="3.4" height="2.1" fill="#fff"/><rect x="370.2" y="58.4" width="3.4" height="2.1" fill="#fff"/><rect x="361.8" y="61.3" width="3.4" height="2.1" fill="#fff"/><rect x="366.0" y="61.3" width="3.4" height="2.1" fill="#fff"/><rect x="370.2" y="61.3" width="3.4" height="2.1" fill="#fff"/><rect x="361.8" y="64.2" width="3.4" height="2.1" fill="#fff"/><rect x="366.0" y="64.2" width="3.4" height="2.1" fill="#fff"/><rect x="370.2" y="64.2" width="3.4" height="2.1" fill="#fff"/><path d="M384 58.5H391L387.5 62.5Z" fill="#1a1a1a" stroke="#5a5a5a" stroke-width="0.7"/><g fill="none" stroke="#3f8cc8" stroke-width="1.1"><circle cx="405" cy="60.5" r="6.6"/><ellipse cx="405" cy="60.5" rx="3" ry="6.6"/><path d="M398.5 58H411.5M398.5 62.8H411.5M405 54V67"/></g><g fill="#2d2d2d" stroke="#5d7890" stroke-width="1.1"><circle cx="411.6" cy="62.6" r="2.4"/><circle cx="407.8" cy="66.4" r="2.4"/></g><path d="M422.2 53.2H430.5L433.2 56V67.8H422.2Z" fill="#fff" stroke="#8ea6c8" stroke-width="0.8"/><g fill="#7f93a8"><rect x="423.5" y="56" width="4" height="0.9"/><rect x="423.5" y="58" width="4" height="0.9"/><rect x="423.5" y="60" width="4" height="0.9"/><rect x="423.5" y="62" width="4" height="0.9"/><rect x="423.5" y="64" width="6" height="0.9"/></g><rect x="427.8" y="56.5" width="7.6" height="7.6" fill="#fff" stroke="#ee7434" stroke-width="1.6"/><g fill="#6f8aa4"><rect x="429.3" y="58.3" width="4.6" height="0.9"/><rect x="429.3" y="60.1" width="4.6" height="0.9"/><rect x="429.3" y="61.9" width="4.6" height="0.9"/></g><path d="M459 54H464.5V55.6H463.4V67H461.8V55.6H461V67H459.4V61.2Q455 61 455 57.6Q455 54 459 54Z" fill="#5a7590"/><text x="24.6" y="90.8" font-family="Liberation Serif" font-size="14.5" font-weight="bold" font-style="normal" fill="#5a7590" stroke="#5a7590" stroke-width="0.3">B</text><path d="M50.6 91L57.6 80" stroke="#5a7590" stroke-width="1.5"/><text x="71.2" y="89" font-family="Liberation Serif" font-size="15" font-weight="normal" font-style="normal" fill="#5a7590" stroke="#5a7590" stroke-width="0.6">U</text><rect x="72" y="91" width="11" height="1" fill="#5a7590"/><text x="97.2" y="90.8" font-family="Liberation Serif" font-size="15" font-weight="normal" font-style="normal" fill="#5a7590" stroke="#5a7590" stroke-width="0.7">S</text><rect x="95.5" y="85" width="12" height="1.2" fill="#5a7590"/><text x="119.6" y="90.2" font-family="Liberation Serif" font-size="15" font-weight="normal" font-style="normal" fill="#5a7590" stroke="#5a7590" stroke-width="0.6">O</text><rect x="121.5" y="78" width="9.5" height="1.2" fill="#5a7590"/><text x="142.2" y="90" font-family="Liberation Serif" font-size="17" font-weight="normal" font-style="italic" fill="#5a7590" stroke="#5a7590" stroke-width="0.5">f</text><text x="151.6" y="92" font-family="Liberation Sans" font-size="9" font-weight="bold" font-style="normal" fill="#3d8fcf">2</text><text x="166" y="90" font-family="Liberation Serif" font-size="17" font-weight="normal" font-style="italic" fill="#5a7590" stroke="#5a7590" stroke-width="0.5">f</text><text x="175.6" y="83.5" font-family="Liberation Sans" font-size="9" font-weight="bold" font-style="normal" fill="#3d8fcf">2</text><g fill="#5a7590"><ellipse cx="201.6" cy="85.6" rx="3.6" ry="3"/><ellipse cx="210.4" cy="85.6" rx="3.6" ry="3"/><rect x="204" y="85" width="4" height="1"/></g><path d="M198.2 85V82.5L200.2 80.2M213.8 85V82.5L211.8 80.2" fill="none" stroke="#5a7590" stroke-width="1"/><rect x="200.6" y="85" width="1.2" height="1.2" fill="#fff"/><rect x="209.8" y="85" width="1.2" height="1.2" fill="#fff"/><text x="229.8" y="91" font-family="Liberation Serif" font-size="16.5" font-weight="normal" font-style="normal" fill="#5a7590" stroke="#5a7590" stroke-width="0.6">A</text><path d="M239 82H246L242.5 78.2Z" fill="#3d8fcf"/><text x="254.2" y="91" font-family="Liberation Serif" font-size="14" font-weight="normal" font-style="normal" fill="#5a7590" stroke="#5a7590" stroke-width="0.6">A</text><path d="M262 78H269L265.5 82Z" fill="#3d8fcf"/><text x="289.5" y="88" font-family="Liberation Serif" font-size="14" font-weight="normal" font-style="normal" fill="#5a7590" stroke="#5a7590" stroke-width="0.6">A</text><rect x="287" y="89" width="14" height="4" fill="#ee7434" stroke="#1e1e1e" stroke-width="0.6"/><path d="M316 87.5L314.6 86.2L323 77.8L325.8 80.6L317.6 88.8Z" fill="#e8c95a" stroke="#5a6e80" stroke-width="0.8"/><path d="M322.5 78.3L325.5 81.2L327 79.6Q327 78.8 326.2 78Q325.2 77 324.2 77Z" fill="#5a7590"/><rect x="310.8" y="89" width="14.4" height="4" fill="#e8c95a" stroke="#1e1e1e" stroke-width="0.6"/><rect x="343" y="78" width="14" height="1" fill="#5f7f9c"/><rect x="343" y="80" width="11" height="1" fill="#5f7f9c"/><rect x="343" y="82" width="14" height="1" fill="#5f7f9c"/><rect x="343" y="84" width="11" height="1" fill="#5f7f9c"/><rect x="343" y="86" width="14" height="1" fill="#5f7f9c"/><rect x="343" y="88" width="12" height="1" fill="#5f7f9c"/><rect x="343" y="90" width="14" height="1" fill="#5f7f9c"/><rect x="367" y="78" width="14" height="1" fill="#5f7f9c"/><rect x="369" y="80" width="10" height="1" fill="#5f7f9c"/><rect x="367" y="82" width="14" height="1" fill="#5f7f9c"/><rect x="369" y="84" width="10" height="1" fill="#5f7f9c"/><rect x="367" y="86" width="14" height="1" fill="#5f7f9c"/><rect x="369" y="88" width="10" height="1" fill="#5f7f9c"/><rect x="367" y="90" width="14" height="1" fill="#5f7f9c"/><rect x="391" y="78" width="14" height="1" fill="#5f7f9c"/><rect x="394" y="80" width="11" height="1" fill="#5f7f9c"/><rect x="391" y="82" width="14" height="1" fill="#5f7f9c"/><rect x="394" y="84" width="11" height="1" fill="#5f7f9c"/><rect x="391" y="86" width="14" height="1" fill="#5f7f9c"/><rect x="393" y="88" width="12" height="1" fill="#5f7f9c"/><rect x="391" y="90" width="14" height="1" fill="#5f7f9c"/><rect x="415" y="78" width="14" height="1" fill="#5f7f9c"/><rect x="415" y="80" width="14" height="1" fill="#5f7f9c"/><rect x="415" y="82" width="14" height="1" fill="#5f7f9c"/><rect x="415" y="84" width="14" height="1" fill="#5f7f9c"/><rect x="415" y="86" width="14" height="1" fill="#5f7f9c"/><rect x="415" y="88" width="14" height="1" fill="#5f7f9c"/><rect x="415" y="90" width="14" height="1" fill="#5f7f9c"/><rect x="438.5" y="78" width="1" height="14" fill="#3d8fcf"/><rect x="453.2" y="78" width="1" height="14" fill="#3d8fcf"/><rect x="441.5" y="80.2" width="9" height="1" fill="#3d8fcf"/><path d="M440 80.7L443 78.2V83.2Z M452 80.7L449 78.2V83.2Z" fill="#3d8fcf"/><rect x="441" y="84" width="11" height="1" fill="#5f7f9c"/><rect x="441" y="86" width="11" height="1" fill="#5f7f9c"/><rect x="441" y="88" width="11" height="1" fill="#5f7f9c"/><rect x="441" y="90" width="11" height="1" fill="#5f7f9c"/><rect x="471" y="78" width="3" height="3" fill="#3d8fcf"/><rect x="475" y="79" width="10" height="1" fill="#5f7f9c"/><rect x="499.5" y="79" width="9.5" height="1" fill="#5f7f9c"/><rect x="471" y="83" width="3" height="3" fill="#3d8fcf"/><rect x="475" y="84" width="10" height="1" fill="#5f7f9c"/><rect x="499.5" y="84" width="9.5" height="1" fill="#5f7f9c"/><rect x="471" y="88" width="3" height="3" fill="#3d8fcf"/><rect x="475" y="89" width="10" height="1" fill="#5f7f9c"/><rect x="499.5" y="89" width="9.5" height="1" fill="#5f7f9c"/><g fill="none" stroke="#3d8fcf" stroke-width="1.2"><path d="M495 78.8L496.8 78V82M495 82.2H498.5"/><path d="M495 83.8Q496.8 82.4 498.2 83.8Q498.2 85.2 495.2 86.8H498.5"/><path d="M495 88H498.2L496.6 89.6Q498.4 89.8 498.2 91.2Q497 92.6 495 91.6"/></g><rect x="526" y="77" width="15" height="1" fill="#5f7f9c"/><rect x="526" y="88" width="15" height="1" fill="#5f7f9c"/><rect x="526" y="90" width="10" height="1" fill="#5f7f9c"/><rect x="535" y="79" width="6" height="2" fill="#5f7f9c"/><rect x="535" y="82" width="6" height="2" fill="#5f7f9c"/><rect x="535" y="85" width="6" height="2" fill="#5f7f9c"/><path d="M526 83L530 79.5V81.8H534V84.2H530V86.5Z" fill="#3d8fcf"/><rect x="551" y="77" width="15" height="1" fill="#5f7f9c"/><rect x="551" y="88" width="15" height="1" fill="#5f7f9c"/><rect x="551" y="90" width="10" height="1" fill="#5f7f9c"/><rect x="560" y="79" width="6" height="2" fill="#5f7f9c"/><rect x="560" y="82" width="6" height="2" fill="#5f7f9c"/><rect x="560" y="85" width="6" height="2" fill="#5f7f9c"/><path d="M559 83L555 79.5V81.8H551V84.2H555V86.5Z" fill="#3d8fcf"/><rect x="589" y="78" width="7" height="1" fill="#5f7f9c"/><rect x="584" y="80" width="12" height="1" fill="#5f7f9c"/><rect x="584" y="82" width="12" height="1" fill="#5f7f9c"/><rect x="584" y="84" width="12" height="1" fill="#5f7f9c"/><rect x="584" y="86" width="6" height="1" fill="#5f7f9c"/><rect x="583" y="88" width="14" height="4" fill="#ee7434"/><path d="M352 277H358.6L361.8 280.2V290H352Z" fill="#fff" stroke="#000" stroke-width="1.6"/><circle cx="360.6" cy="284.8" r="3" fill="#c8c8c8" stroke="#000" stroke-width="1.2"/><rect x="359.3" y="283.2" width="1.6" height="1.4" fill="#20e8f0"/><rect x="361" y="285.4" width="1.4" height="1.3" fill="#20e8f0"/><path d="M362.8 287L366 290.2" stroke="#000" stroke-width="1.8"/><g fill="none" stroke="#fff" stroke-width="1.1"><path d="M365.5 315L368 310H376.5L375 315"/><path d="M363.5 315.5H377.5Q378.5 315.5 378.5 316.5V323.5H363.5Z"/><path d="M366 321.5H376"/><path d="M368.5 312H374.5M367.5 314H373.5"/></g><rect x="365" y="318.2" width="12" height="1.6" fill="#111"/><rect x="369.5" y="318.2" width="3.5" height="1.6" fill="#2030ff"/><path d="M390.5 309.5H399.5L401.5 311.5V323.5H390.5Z" fill="#2e2e2e" stroke="#fff" stroke-width="1"/><g fill="#5ae45a"><rect x="393" y="310" width="1" height="13"/><rect x="398.8" y="311" width="1" height="12"/><rect x="391" y="311.5" width="8.5" height="1"/><rect x="391" y="321.5" width="10" height="1"/></g></svg>
</body></html>
